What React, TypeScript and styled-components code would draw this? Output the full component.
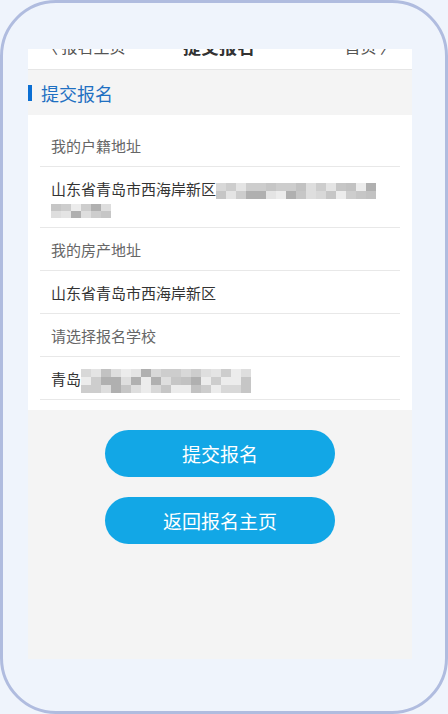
import styled, { createGlobalStyle } from 'styled-components';

const GlobalStyle = createGlobalStyle`
  html, body {
    margin: 0;
    padding: 0;
    background: #eff4fc;
  }
  * {
    box-sizing: border-box;
  }
`;

const Frame = styled.div`
  width: 448px;
  height: 714px;
  border: 3px solid #b0bcdf;
  border-radius: 56px;
  background: #eff4fc;
  padding: 46px 0 0 25px;
  font-family: 'Noto Sans CJK SC', 'Noto Sans', sans-serif;
`;

const Screen = styled.div`
  width: 384px;
  height: 610px;
  overflow: hidden;
  background: #f4f4f4;
`;

// page is scrolled a little, so the nav bar is partly hidden
const Scroller = styled.div`
  margin-top: -27px;
`;

const NavBar = styled.div`
  height: 48px;
  background: #fff;
  border-bottom: 1px solid #e6e6e6;
  display: flex;
  align-items: center;
  justify-content: space-between;
  padding: 0 16px 0 14px;
  color: #555;
`;

const NavSide = styled.span<{ $right?: boolean }>`
  font-size: 16px;
  width: 90px;
  white-space: nowrap;
  text-align: ${(p) => (p.$right ? 'right' : 'left')};
`;

const NavTitle = styled.span`
  font-size: 18px;
  font-weight: bold;
  color: #333;
`;

const SectionTitle = styled.div`
  height: 45px;
  display: flex;
  align-items: center;
  gap: 9px;
  color: #1f70c2;
  font-size: 18px;
`;

const Bar = styled.span`
  width: 4px;
  height: 16px;
  background: #0b6fd3;
`;

const Card = styled.div`
  background: #fff;
  padding: 9px 12px 10px;
`;

const Row = styled.div<{ $label?: boolean; $multi?: boolean }>`
  padding: ${(p) => (p.$multi ? '12px 11px 8px' : '11px 11px 10px')};
  line-height: ${(p) => (p.$multi ? '20px' : '21px')};
  font-size: 15px;
  color: ${(p) => (p.$label ? '#666' : '#333')};
  border-bottom: 1px solid #e8e8e8;
`;

const Mosaic = styled.span`
  display: inline-flex;
  flex-direction: column;
  vertical-align: middle;
  margin: -6px 0;
`;

const MosaicRow = styled.span`
  display: flex;
`;

const Cell = styled.span<{ $w: number; $h: number }>`
  width: ${(p) => p.$w}px;
  height: ${(p) => p.$h}px;
`;

const shades = ['#e4e4e4', '#c2c2c2', '#cdcdcd', '#b0b0b0', '#d8d8d8', '#ececec', '#c6c6c6', '#dedede'];

function Blur({ rows, cols, w, h, seed }: { rows: number; cols: number; w: number; h: number; seed: number }) {
  const out = [];
  for (let r = 0; r < rows; r++) {
    const cells = [];
    for (let c = 0; c < cols; c++) {
      const n = Math.abs(Math.sin((c + 1) * 12.9898 + (r + 1) * 78.233 + seed * 37.719) * 43758.5453);
      const i = Math.floor((n - Math.floor(n)) * shades.length);
      cells.push(<Cell key={c} $w={w} $h={h} style={{ background: shades[i] }} />);
    }
    out.push(<MosaicRow key={r}>{cells}</MosaicRow>);
  }
  return <Mosaic>{out}</Mosaic>;
}

const Actions = styled.div`
  display: flex;
  flex-direction: column;
  align-items: center;
  gap: 20px;
  padding-top: 20px;
`;

const Button = styled.button`
  width: 230px;
  height: 47px;
  border: none;
  border-radius: 24px;
  background: #12a7e6;
  color: #fff;
  font-family: inherit;
  font-size: 19px;
`;

export default function App() {
  return (
    <>
      <GlobalStyle />
      <Frame>
        <Screen>
          <Scroller>
            <NavBar>
              <NavSide>〈 报名主页</NavSide>
              <NavTitle>提交报名</NavTitle>
              <NavSide $right>首页 〉</NavSide>
            </NavBar>
            <SectionTitle>
              <Bar />
              提交报名
            </SectionTitle>
            <Card>
              <Row $label>我的户籍地址</Row>
              <Row $multi>
                山东省青岛市西海岸新区<Blur rows={2} cols={16} w={10} h={8} seed={1} />
                <br />
                <Blur rows={2} cols={6} w={10} h={7} seed={3} />
              </Row>
              <Row $label>我的房产地址</Row>
              <Row>山东省青岛市西海岸新区</Row>
              <Row $label>请选择报名学校</Row>
              <Row>
                青岛<Blur rows={3} cols={17} w={10} h={8} seed={2} />
              </Row>
            </Card>
            <Actions>
              <Button>提交报名</Button>
              <Button>返回报名主页</Button>
            </Actions>
          </Scroller>
        </Screen>
      </Frame>
    </>
  );
}
